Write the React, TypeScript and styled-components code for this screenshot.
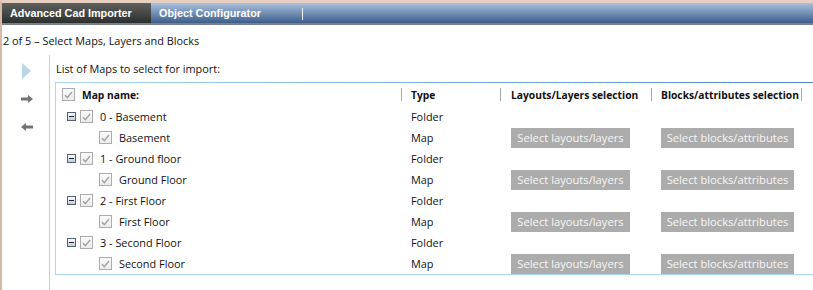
import React from 'react';
import styled, { createGlobalStyle } from 'styled-components';

const GlobalStyle = createGlobalStyle`
  html, body { margin: 0; padding: 0; background: #fff; }
  body { font-family: "Open Sans", "Noto Sans", sans-serif; font-size: 10.9px; color: #111; }
`;

const Page = styled.div`
  width: 813px;
  height: 290px;
  box-sizing: border-box;
  border-top: 3px solid #e7cfc1;
  border-left: 2px solid #d8b9a8;
  background: #fff;
  display: flex;
  flex-direction: column;
  overflow: hidden;
`;

const TabBar = styled.div`
  height: 20px;
  flex: none;
  border-bottom: 2px solid #7a8089;
  background: linear-gradient(#abc1dd, #3d5e8b);
  display: flex;
  align-items: stretch;
`;

const Tab = styled.div<{ $active?: boolean }>`
  width: ${(p) => (p.$active ? '141px' : 'auto')};
  padding-left: 8px;
  background: ${(p) => (p.$active ? 'linear-gradient(#5f615f, #2d2f2d)' : 'transparent')};
  color: #fff;
  font: bold 10.8px "Liberation Sans", Arial, sans-serif;
  display: flex;
  align-items: center;
`;

const TabDivider = styled.div`
  width: 1px;
  margin: 5px 0 3px 41px;
  background: #eef2f8;
`;

const Subtitle = styled.div`
  height: 30px;
  flex: none;
  display: flex;
  align-items: center;
  padding-left: 1px;
`;

const Body = styled.div`
  flex: 1;
  display: flex;
  min-height: 0;
`;

const Sidebar = styled.div`
  width: 48px;
  flex: none;
  border-right: 1px solid #cfcfcf;
  display: flex;
  flex-direction: column;
  align-items: center;
  padding-left: 2px;
  box-sizing: border-box;
  padding-top: 8px;
`;

const SideIcon = styled.svg<{ $gap: number }>`
  display: block;
  margin-top: ${(p) => p.$gap}px;
`;

const Main = styled.div`
  flex: 1;
  padding-left: 5px;
  display: flex;
  flex-direction: column;
`;

const ListLabel = styled.div`
  height: 27px;
  display: flex;
  align-items: center;
  padding-left: 1px;
  box-sizing: border-box;
`;

const GridBox = styled.div`
  border-left: 1px solid #a9d9ee;
  border-bottom: 1px solid #a9d9ee;
  display: flex;
  flex-direction: column;
`;

const TopRule = styled.div`
  height: 1px;
  background: linear-gradient(90deg, #a9d9ee 0%, #7fb3df 45%, #4f89c6 100%);
`;

const Row = styled.div<{ $header?: boolean }>`
  height: ${(p) => (p.$header ? '23px' : '21px')};
  display: grid;
  grid-template-columns: 345px 99px 151px 150px 1px;
  align-items: center;
  font-weight: ${(p) => (p.$header ? 700 : 400)};
  font-size: ${(p) => (p.$header ? '10.25px' : 'inherit')};
`;

const NameCell = styled.div<{ $indent: number }>`
  display: flex;
  align-items: center;
  padding-left: ${(p) => p.$indent}px;
  height: 100%;
`;

const Cell = styled.div<{ $sep?: boolean; $pad?: number }>`
  position: relative;
  display: flex;
  align-items: center;
  height: 100%;
  padding-left: ${(p) => p.$pad ?? 10}px;
  white-space: nowrap;
  ${(p) =>
    p.$sep
      ? `&::before { content: ''; position: absolute; left: 0; top: 5px; height: 13px; width: 1px; background: #a9a9a9; }`
      : ''}
`;

const EndSep = styled.div`
  width: 1px;
  height: 13px;
  background: #a9a9a9;
  align-self: center;
`;

const Expander = styled.div`
  width: 7px;
  height: 7px;
  border: 1px solid #50607a;
  background: linear-gradient(#ffffff, #c4ccd6);
  display: flex;
  align-items: center;
  justify-content: center;
  margin-right: 4px;
  &::after {
    content: '';
    width: 5px;
    height: 1px;
    background: #1f2430;
  }
`;

const CheckBox = styled.div`
  width: 11px;
  height: 11px;
  border: 1px solid #acacac;
  background: linear-gradient(#fafafa, #ececec);
  display: flex;
  align-items: center;
  justify-content: center;
  margin-right: 7px;
  flex: none;
`;

const Label = styled.span`
  white-space: nowrap;
`;

const ActionButton = styled.div`
  height: 20px;
  background: #acacac;
  color: #f6f6f6;
  display: flex;
  align-items: center;
  justify-content: center;
  box-sizing: border-box;
  font-size: 11.2px;
`;

const Check = () => (
  <CheckBox>
    <svg width="9" height="8" viewBox="0 0 9 8">
      <path d="M1 4.2 L3.4 6.6 L8 1" fill="none" stroke="#a3a3a3" strokeWidth="1.4" />
    </svg>
  </CheckBox>
);

type Item = { name: string; level: 0 | 1; type: 'Folder' | 'Map' };

const items: Item[] = [
  { name: '0 - Basement', level: 0, type: 'Folder' },
  { name: 'Basement', level: 1, type: 'Map' },
  { name: '1 - Ground floor', level: 0, type: 'Folder' },
  { name: 'Ground Floor', level: 1, type: 'Map' },
  { name: '2 - First Floor', level: 0, type: 'Folder' },
  { name: 'First Floor', level: 1, type: 'Map' },
  { name: '3 - Second Floor', level: 0, type: 'Folder' },
  { name: 'Second Floor', level: 1, type: 'Map' },
];

export default function App() {
  return (
    <>
      <GlobalStyle />
      <Page>
        <TabBar>
          <Tab $active>Advanced Cad Importer</Tab>
          <Tab>Object Configurator</Tab>
          <TabDivider />
        </TabBar>
        <Subtitle>2 of 5 – Select Maps, Layers and Blocks</Subtitle>
        <Body>
          <Sidebar>
            <SideIcon $gap={0} width="9" height="16" viewBox="0 0 9 16">
              <path d="M0 0 L9 8 L0 16 Z" fill="#b9d6e9" />
            </SideIcon>
            <SideIcon $gap={16} width="12" height="8" viewBox="0 0 12 8">
              <path d="M0 2.5 H7 V0 L12 4 L7 8 V5.5 H0 Z" fill="#737373" />
            </SideIcon>
            <SideIcon $gap={20} width="12" height="8" viewBox="0 0 12 8">
              <path d="M12 2.5 H5 V0 L0 4 L5 8 V5.5 H12 Z" fill="#737373" />
            </SideIcon>
          </Sidebar>
          <Main>
            <ListLabel>List of Maps to select for import:</ListLabel>
            <GridBox>
              <TopRule />
              <Row $header>
                <NameCell $indent={6}>
                  <Check />
                  <Label>Map name:</Label>
                </NameCell>
                <Cell $sep>Type</Cell>
                <Cell $sep $pad={11}>Layouts/Layers selection</Cell>
                <Cell $sep>Blocks/attributes selection</Cell>
                <EndSep />
              </Row>
              {items.map((it, i) => (
                <Row key={i}>
                  <NameCell $indent={it.level === 0 ? 11 : 43}>
                    {it.level === 0 && <Expander />}
                    <Check />
                    <Label>{it.name}</Label>
                  </NameCell>
                  <Cell>{it.type}</Cell>
                  <Cell $pad={11}>
                    {it.type === 'Map' && <ActionButton style={{ width: 119 }}>Select layouts/layers</ActionButton>}
                  </Cell>
                  <Cell>
                    {it.type === 'Map' && <ActionButton style={{ width: 133 }}>Select blocks/attributes</ActionButton>}
                  </Cell>
                  <div />
                </Row>
              ))}
            </GridBox>
          </Main>
        </Body>
      </Page>
    </>
  );
}
